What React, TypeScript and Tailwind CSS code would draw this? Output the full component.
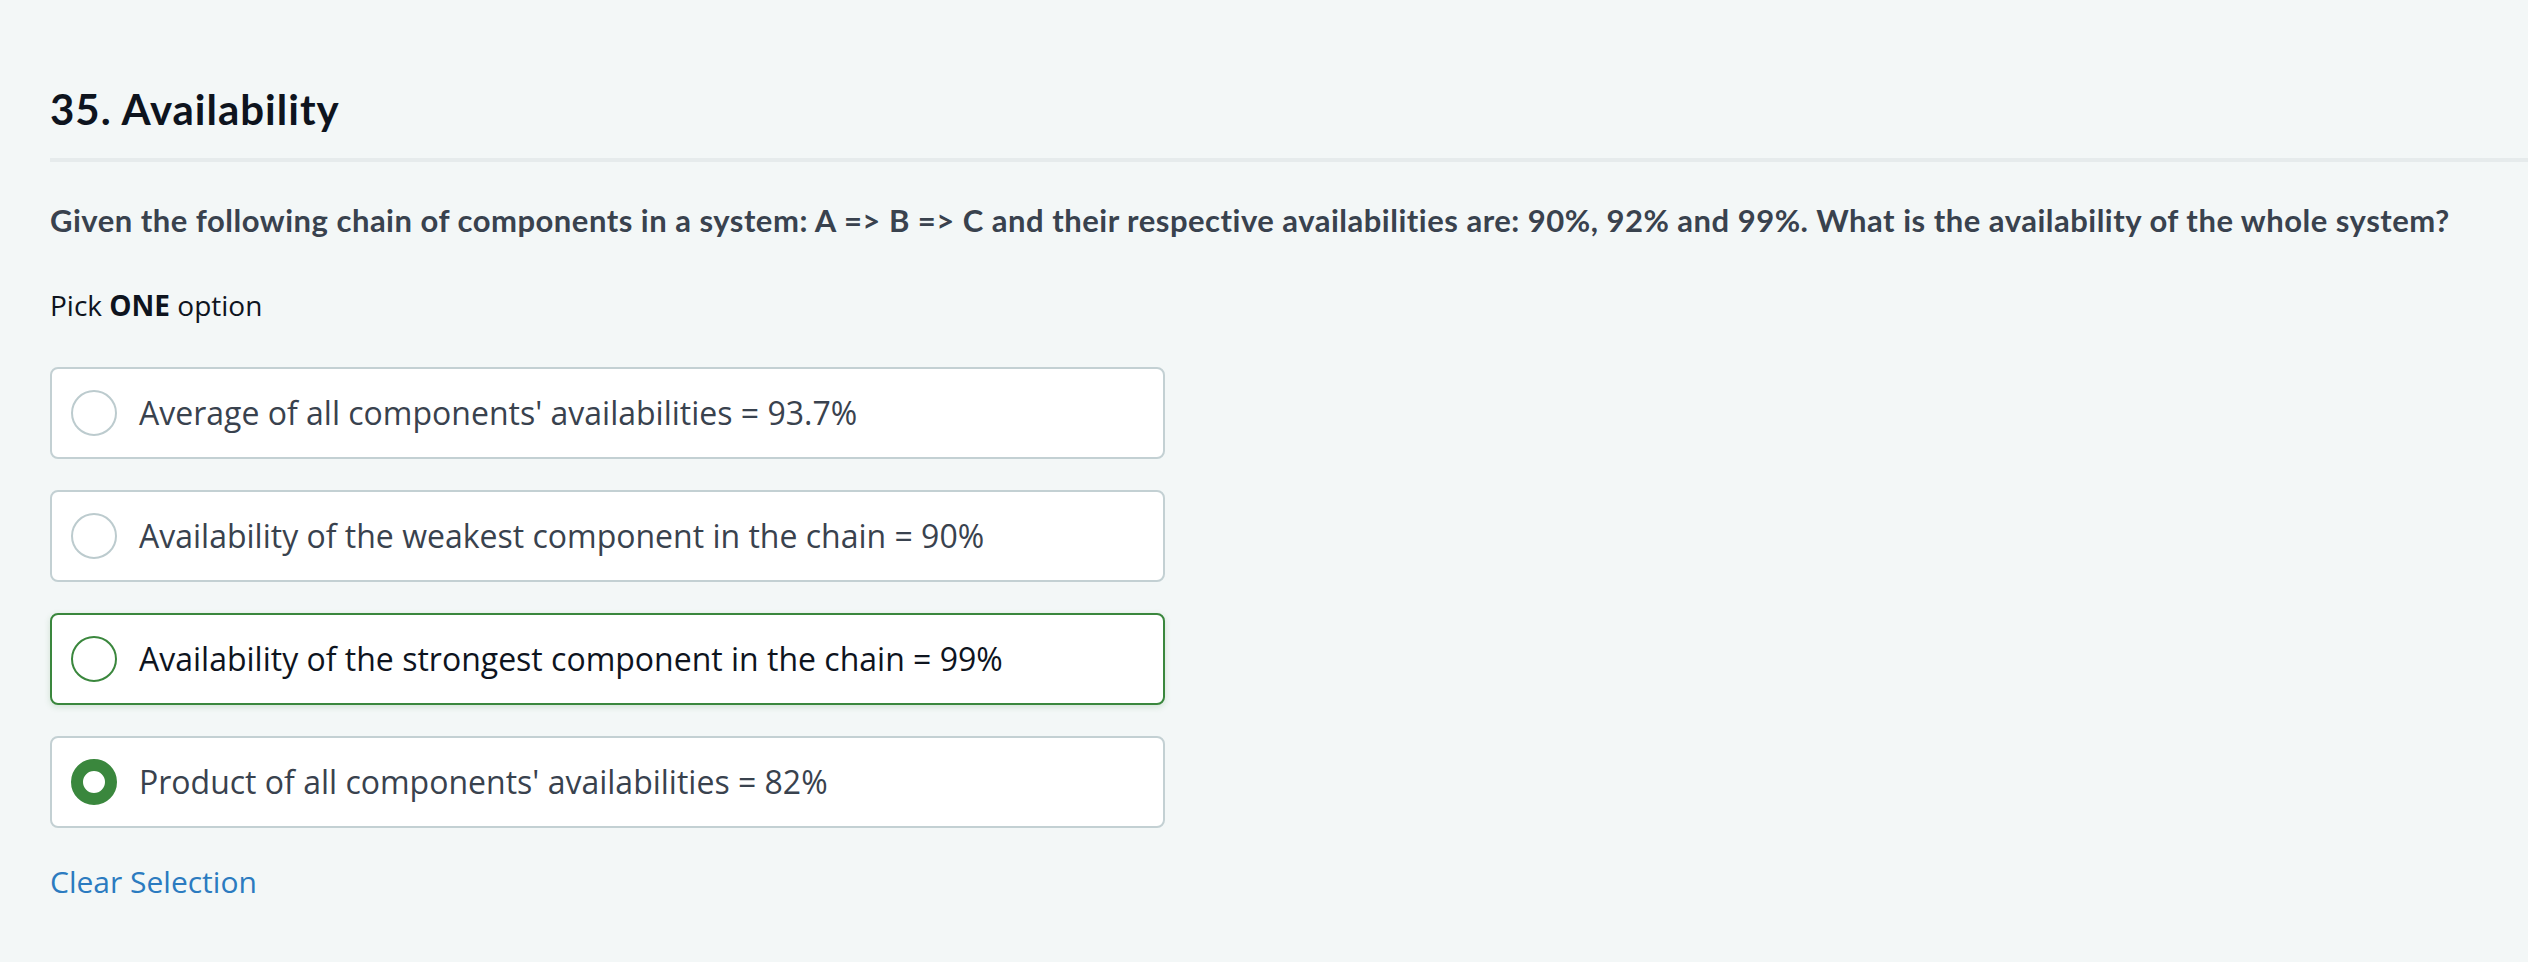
import React from 'react';

type Option = { id: number; label: string };

const options: Option[] = [
  { id: 1, label: "Average of all components' availabilities = 93.7%" },
  { id: 2, label: 'Availability of the weakest component in the chain = 90%' },
  { id: 3, label: 'Availability of the strongest component in the chain = 99%' },
  { id: 4, label: "Product of all components' availabilities = 82%" },
];

function Radio({ state }: { state: 'idle' | 'hover' | 'checked' }) {
  if (state === 'checked') {
    return (
      <span className="w-[46px] h-[46px] rounded-full border-[12px] border-[#3a873d] bg-white shrink-0" />
    );
  }
  return (
    <span
      className={`w-[46px] h-[46px] rounded-full border-2 bg-white shrink-0 ${
        state === 'hover' ? 'border-[#3a873d]' : 'border-[#bccbce]'
      }`}
    />
  );
}

export default function App() {
  const hovered = 3;
  const selected = 4;

  return (
    <div className="min-h-[962px] w-full bg-[#f3f7f7] pl-[50px]">
      <h1 className="pt-[85px] text-[42px] leading-[48px] tracking-[1px] font-bold text-[#0e141e] font-['Lato',sans-serif] [font-variant-ligatures:none]">
        35. Availability
      </h1>
      <div className="mt-[25px] h-[4px] bg-[#e6ebec]" />

      <p className="mt-[40px] text-[31px] leading-[37px] tracking-[0.5px] font-bold text-[#39424e] font-['Lato',sans-serif] [font-variant-ligatures:none]">
        Given the following chain of components in a system: A =&gt; B =&gt; C and their respective
        availabilities are: 90%, 92% and 99%. What is the availability of the whole system?
      </p>

      <p className="mt-[47px] text-[28px] leading-[38px] text-[#0e141e] font-['Open_Sans',sans-serif]">
        Pick <span className="font-bold">ONE</span> option
      </p>

      <div className="mt-[43px] flex flex-col gap-[31px] w-[1115px] font-['Open_Sans',sans-serif]">
        {options.map((o) => {
          const state = o.id === selected ? 'checked' : o.id === hovered ? 'hover' : 'idle';
          return (
            <label
              key={o.id}
              className={`h-[92px] flex items-center gap-[22px] pl-[19px] rounded-lg border-2 bg-white cursor-pointer ${
                state === 'hover'
                  ? 'border-[#3a873d] shadow-[0_2px_6px_rgba(58,135,61,0.18)]'
                  : 'border-[#c3d0d3]'
              }`}
            >
              <Radio state={state} />
              <span
                className={`text-[32px] leading-[44px] ${
                  state === 'hover' ? 'text-[#0e141e]' : 'text-[#39424e]'
                }`}
              >
                {o.label}
              </span>
            </label>
          );
        })}
      </div>

      <button className="mt-[34px] block text-[30px] leading-[40px] text-[#2b7bc0] font-['Open_Sans',sans-serif]">
        Clear Selection
      </button>
    </div>
  );
}
